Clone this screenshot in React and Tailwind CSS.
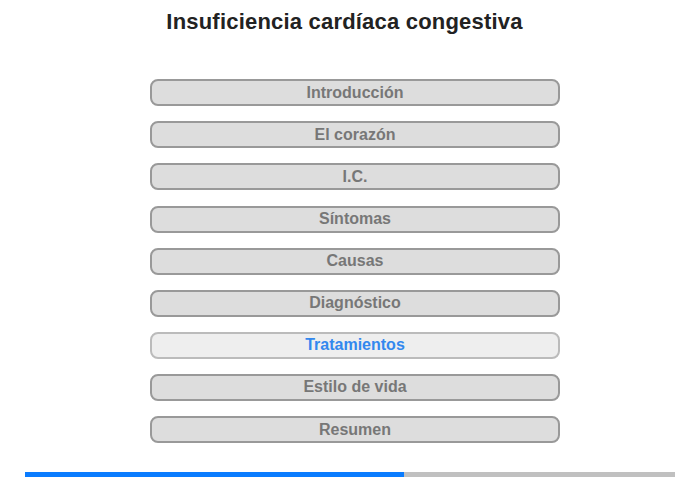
import React from "react";

const sections = [
  "Introducción",
  "El corazón",
  "I.C.",
  "Síntomas",
  "Causas",
  "Diagnóstico",
  "Tratamientos",
  "Estilo de vida",
  "Resumen",
];

const App = () => {
  const active = "Tratamientos";

  return (
    <div className="w-[700px] h-[480px] bg-white flex flex-col font-['Liberation_Sans',Arial,sans-serif]">
      <h1 className="mt-[9px] h-[26px] pr-[11px] text-center text-[22px] leading-[26px] font-bold tracking-[0.2px] text-[#222]">
        Insuficiencia cardíaca congestiva
      </h1>
      <div className="mt-[44.3px] pl-[10px] flex flex-col items-center gap-[15.1px]">
        {sections.map((s) =>
          s === active ? (
            <button
              key={s}
              className="w-[410px] h-[27px] rounded-[8px] border-2 border-[#bbbbbb] bg-[#eeeeee] text-[16px] font-bold text-[#3388ee] leading-none"
            >
              {s}
            </button>
          ) : (
            <button
              key={s}
              className="w-[410px] h-[27px] rounded-[8px] border-2 border-[#999999] bg-[#dddddd] text-[16px] font-bold text-[#777777] leading-none"
            >
              {s}
            </button>
          )
        )}
      </div>
      <div className="mt-[29px] mx-[25px] w-[650px] h-[5px] bg-[#c0c0c0] flex">
        <div className="w-[379px] h-full bg-[#0a7cff]" />
      </div>
    </div>
  );
};

export default App;
